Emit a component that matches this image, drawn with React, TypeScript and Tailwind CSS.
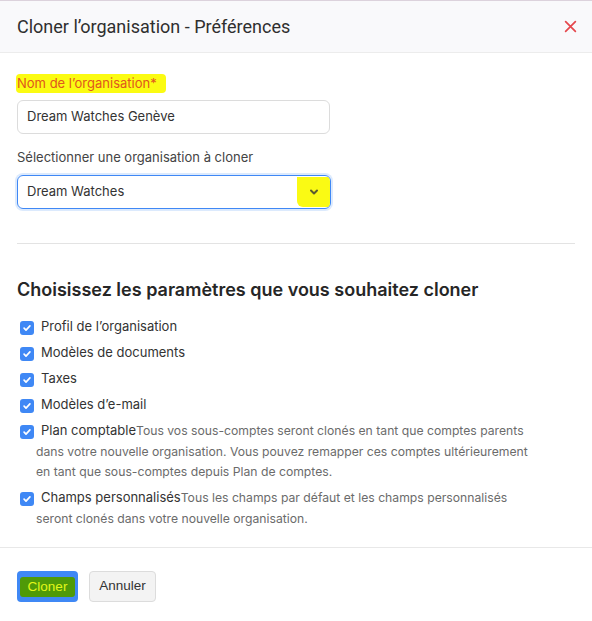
import * as React from 'react';

const Check = () => (
  <span className="inline-flex items-center justify-center w-[14px] h-[14px] rounded-[3px] bg-[#3f88f5] align-[-2px] -ml-[16px] mr-[7px]">
    <svg className="w-[10px] h-[10px]" viewBox="0 0 12 12" fill="none" stroke="white" strokeWidth={2} strokeLinecap="round" strokeLinejoin="round">
      <path d="M2.5 6.2l2.3 2.3 4.7-5" />
    </svg>
  </span>
);

interface OptionProps {
  label: string;
  help?: string;
}

const Option = ({ label, help }: OptionProps) => (
  <div className="pl-[19px] text-[12.2px] leading-[20.5px] w-[515px]">
    <Check />
    <span className="text-[13px] text-[#333] leading-none">{label}</span>
    {help && <span className="text-[#6b6b6b] leading-none">{help}</span>}
  </div>
);

export default function App() {
  return (
    <div className="w-[592px] h-[621px] bg-white font-['Inter','Noto_Sans',sans-serif] overflow-hidden">
      {/* Header */}
      <div className="h-[53px] bg-[#f9f9fb] border-t border-t-[#dcd2dc] border-b border-b-[#ececec] flex items-center justify-between pl-[17px] pr-[15px]">
        <h1 className="text-[18px] text-[#2f2f2f] font-['Roboto',sans-serif]">Cloner l’organisation - Préférences</h1>
        <button className="text-[#e5484d]">
          <svg className="w-[13px] h-[13px]" viewBox="0 0 12 12" stroke="currentColor" strokeWidth={1.6} strokeLinecap="round">
            <path d="M1.5 1.5l9 9M10.5 1.5l-9 9" />
          </svg>
        </button>
      </div>

      {/* Body */}
      <div className="px-[17px] pt-[17px]">
        <label className="inline-block bg-[#fbfb12] text-[#e0561e] text-[13px] leading-[19px] pr-[9px] -ml-[1px] pl-[1px] rounded-sm">Nom de l’organisation*</label>
        <div className="mt-[6px] w-[313px] h-[34px] border border-[#dcdcdc] rounded-[6px] flex items-center px-[9px] text-[13px] text-[#333]">
          Dream Watches Genève
        </div>

        <div className="mt-[14px] text-[13px] text-[#444] leading-[19px]">Sélectionner une organisation à cloner</div>
        <div className="mt-[8px] w-[314px] h-[34px] border border-[#3f88f5] rounded-[6px] flex items-center pl-[9px] text-[13px] text-[#333] shadow-[0_0_0_2px_#dceafd] overflow-hidden">
          <span className="flex-1">Dream Watches</span>
          <span className="w-[33px] h-[30px] bg-[#fafa14] flex items-center justify-center rounded-bl-[6px]">
            <svg className="w-[12px] h-[12px]" viewBox="0 0 12 12" fill="none" stroke="#5a5a30" strokeWidth={2} strokeLinecap="round" strokeLinejoin="round">
              <path d="M3 4.5l3 3 3-3" />
            </svg>
          </span>
        </div>

        <div className="mt-[34px] border-t border-[#e3e3e3]" />

        <h2 className="mt-[34px] text-[18px] font-semibold text-[#262626] leading-[24px]">Choisissez les paramètres que vous souhaitez cloner</h2>

        <div className="mt-[15px] flex flex-col gap-[5.5px]">
          <Option label="Profil de l’organisation" />
          <Option label="Modèles de documents" />
          <Option label="Taxes" />
          <Option label="Modèles d’e-mail" />
          <Option
            label="Plan comptable"
            help="Tous vos sous-comptes seront clonés en tant que comptes parents dans votre nouvelle organisation. Vous pouvez remapper ces comptes ultérieurement en tant que sous-comptes depuis Plan de comptes."
          />
          <Option
            label="Champs personnalisés"
            help="Tous les champs par défaut et les champs personnalisés seront clonés dans votre nouvelle organisation."
          />
        </div>
      </div>

      {/* Footer */}
      <div className="mt-[18px] border-t border-[#e8e8e8] px-[17px] pt-[23px] flex gap-[11px] font-['Liberation_Sans',Arial,sans-serif]">
        <button className="w-[61px] h-[31px] rounded-[4px] bg-[#3f88f5] flex items-center justify-center">
          <span className="bg-[#4f9a08] text-[#e2f71a] text-[13.5px] px-[8px] leading-[20px] rounded-[3px]">Cloner</span>
        </button>
        <button className="w-[67px] h-[31px] rounded-[4px] bg-[#f3f3f3] border border-[#dcdcdc] text-[13.5px] text-[#333]">
          Annuler
        </button>
      </div>
    </div>
  );
}
